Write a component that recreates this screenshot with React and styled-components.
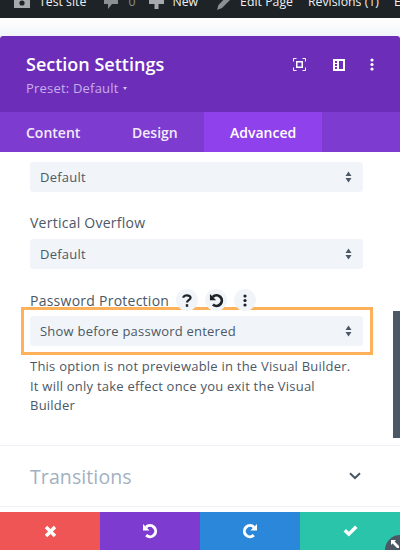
import React from 'react';
import styled, { createGlobalStyle } from 'styled-components';

const GlobalStyle = createGlobalStyle`
  html, body {
    margin: 0;
    padding: 0;
    background: #fff;
  }
  * {
    box-sizing: border-box;
  }
`;

const Page = styled.div`
  width: 400px;
  height: 550px;
  overflow: hidden;
  display: flex;
  flex-direction: column;
  position: relative;
  font-family: "Open Sans", sans-serif;
  background: #fff;
`;

const AdminBar = styled.div`
  height: 18px;
  flex-shrink: 0;
  background: #1d2327;
  display: flex;
  align-items: flex-end;
  overflow: hidden;
  white-space: nowrap;
  padding: 0 0 7px 14px;
`;

const AdminItem = styled.div`
  display: flex;
  align-items: center;
  gap: ${(p) => p.$gap || 7}px;
  margin-right: ${(p) => p.$right || 0}px;
  font-size: 12.3px;
  line-height: 18px;
  color: ${(p) => p.$muted ? '#8c8f94' : '#f0f0f1'};
`;

const Gap = styled.div`
  height: 18px;
  flex-shrink: 0;
  background: linear-gradient(#ffffff, #f1f5f9);
`;

const Modal = styled.div`
  flex: 1;
  min-height: 0;
  display: flex;
  flex-direction: column;
  background: #fff;
  border-radius: 3px 3px 0 0;
  overflow: hidden;
`;

const Header = styled.div`
  height: 76px;
  flex-shrink: 0;
  background: #6c2eb9;
  padding: 16px 26px 0;
  display: flex;
  justify-content: space-between;
`;

const Title = styled.h1`
  margin: 0;
  font-size: 18px;
  line-height: 24px;
  font-weight: 600;
  color: #fff;
`;

const Preset = styled.div`
  display: flex;
  align-items: center;
  gap: 4px;
  margin-top: 4px;
  font-size: 13px;
  line-height: 16px;
  font-weight: 500;
  letter-spacing: 0.2px;
  color: #c9aceb;
`;

const Caret = styled.span`
  width: 0;
  height: 0;
  margin-top: 1px;
  border-left: 2.5px solid transparent;
  border-right: 2.5px solid transparent;
  border-top: 3px solid #d8c3f2;
`;

const HeaderIcons = styled.div`
  display: flex;
  align-items: center;
  height: 13px;
  margin-top: 6px;
  gap: 27px;
`;

const HeaderDots = styled.span`
  display: flex;
  margin-left: -2px;
`;

const Tabs = styled.div`
  height: 40px;
  flex-shrink: 0;
  display: flex;
  background: #7e3bd0;
`;

const Tab = styled.div`
  width: ${(p) => p.$width}px;
  padding-left: ${(p) => p.$left}px;
  display: flex;
  align-items: center;
  font-size: 14px;
  font-weight: 600;
  color: ${(p) => p.$active ? '#fff' : '#f3ebfc'};
  background: ${(p) => p.$active ? '#8f42ec' : 'transparent'};
`;

const Body = styled.div`
  flex: 1;
  min-height: 0;
  padding: 10px 37px 0 30px;
  position: relative;
`;

const Select = styled.div`
  height: 30px;
  margin-top: ${(p) => p.$top || 0}px;
  background: #f1f5f9;
  border-radius: 3px;
  padding: 0 11px 0 10px;
  display: flex;
  align-items: center;
  justify-content: space-between;
  font-size: 13px;
  font-weight: 500;
  letter-spacing: 0.22px;
  color: #4c5866;
`;

const Field = styled.div`
  margin-top: ${(p) => p.$top}px;
`;

const Label = styled.div`
  display: flex;
  align-items: center;
  height: 22px;
  font-size: 14px;
  font-weight: 500;
  letter-spacing: 0.25px;
  color: #4c5866;
`;

const LabelButton = styled.span`
  width: 22px;
  height: 22px;
  margin-left: 7px;
  border-radius: 50%;
  background: #f1f5f9;
  display: flex;
  align-items: center;
  justify-content: center;
  flex-shrink: 0;
`;

const Highlight = styled.div`
  margin: -4px -10px 0 -9px;
  padding: 6px 7px 6px 6px;
  border: 3px solid #ffb05a;
`;

const Hint = styled.p`
  margin: 2px 0 0;
  max-width: 325px;
  font-size: 13px;
  line-height: 19.5px;
  font-weight: 500;
  letter-spacing: 0.23px;
  color: #4c5866;
`;

const ScrollThumb = styled.div`
  position: absolute;
  top: 159px;
  right: 0;
  width: 7px;
  height: 127px;
  background: #4c5866;
`;

const Toggle = styled.div`
  height: 62px;
  flex-shrink: 0;
  border-top: 1px solid #f1f0f7;
  border-bottom: 1px solid #f1f0f7;
  display: flex;
  align-items: center;
  justify-content: space-between;
  padding: 0 39px 0 30px;
`;

const ToggleTitle = styled.div`
  font-size: 19.5px;
  font-weight: 500;
  letter-spacing: 0.1px;
  color: #a3b0c2;
`;

const Footer = styled.div`
  height: 38px;
  flex-shrink: 0;
  margin-top: 5px;
  display: grid;
  grid-template-columns: repeat(4, 1fr);
`;

const FooterButton = styled.div`
  background: ${(p) => p.$color};
  display: flex;
  align-items: center;
  justify-content: center;
`;

const ResizeCorner = styled.div`
  position: absolute;
  right: -15px;
  bottom: -15px;
  width: 30px;
  height: 30px;
  border-radius: 50%;
  background: #4c5866;
  padding: 5px 0 0 6px;
  display: flex;
`;

const SortArrows = () => (
  <svg width="7" height="12" viewBox="0 0 7 12">
    <path d="M3.5 0.5 L6.5 5 H0.5 Z M0.5 7 H6.5 L3.5 11.5 Z" fill="#4c5866" />
  </svg>
);

const UndoIcon = ({ size = 16, color = '#fff', width = 3 }) => (
  <svg width={size} height={size} viewBox="0 0 16 16" fill="none">
    <path d="M4 4.2 A5.6 5.6 0 1 1 4.2 12.2" stroke={color} strokeWidth={width} />
    <path d="M1 1 V7.6 H7.6 Z" fill={color} />
  </svg>
);

const RedoIcon = ({ size = 16, color = '#fff', width = 3 }) => (
  <svg width={size} height={size} viewBox="0 0 16 16" fill="none">
    <path d="M12 4.2 A5.6 5.6 0 1 0 11.8 12.2" stroke={color} strokeWidth={width} />
    <path d="M15 1 V7.6 H8.4 Z" fill={color} />
  </svg>
);

const Dots = ({ color = '#fff', height = 13 }) => (
  <svg width="4" height={height} viewBox="0 0 4 13">
    <circle cx="2" cy="2" r="1.6" fill={color} />
    <circle cx="2" cy="6.5" r="1.6" fill={color} />
    <circle cx="2" cy="11" r="1.6" fill={color} />
  </svg>
);

const App = () => {
  return (
    <Page>
      <GlobalStyle />
      <AdminBar>
        <AdminItem $gap={9} $right={18}>
          <svg width="16" height="14" viewBox="0 0 16 14">
            <path d="M2.5 0 H13.5 Q16 0 16 3 V13 H0 V3 Q0 0 2.5 0 Z" fill="#a7aaad" />
            <circle cx="8" cy="8" r="2.6" fill="#1d2327" />
          </svg>
          Test site
        </AdminItem>
        <AdminItem $muted $gap={10} $right={14}>
          <svg width="14" height="16" viewBox="0 0 14 16">
            <path d="M0 0 H14 V10 H8 L4 15 V10 H0 Z" fill="#8c8f94" />
          </svg>
          0
        </AdminItem>
        <AdminItem $gap={8} $right={19}>
          <svg width="15" height="14" viewBox="0 0 15 14">
            <path d="M5.5 0 H9.5 V5 H15 V9 H9.5 V14 H5.5 V9 H0 V5 H5.5 Z" fill="#a7aaad" />
          </svg>
          New
        </AdminItem>
        <AdminItem $gap={8} $right={15}>
          <svg width="15" height="15" viewBox="0 0 15 15">
            <path d="M11 0 L15 3 L5 13 L0 15 L1.5 10 Z" fill="#8c8f94" />
          </svg>
          Edit Page
        </AdminItem>
        <AdminItem $right={15}>Revisions (1)</AdminItem>
        <AdminItem>E</AdminItem>
      </AdminBar>
      <Gap />
      <Modal>
        <Header>
          <div>
            <Title>Section Settings</Title>
            <Preset>Preset: Default <Caret /></Preset>
          </div>
          <HeaderIcons>
            <svg width="13" height="13" viewBox="0 0 13 13" fill="none">
              <path d="M0.5 3.5 V0.5 H3.5 M9.5 0.5 H12.5 V3.5 M12.5 9.5 V12.5 H9.5 M3.5 12.5 H0.5 V9.5" stroke="#fff" />
              <rect x="3.75" y="3.75" width="5.5" height="5.5" stroke="#fff" strokeWidth="1.5" />
            </svg>
            <svg width="12" height="12" viewBox="0 0 12 12">
              <path fillRule="evenodd" d="M0 0 H12 V12 H0 Z M2 2 V4 H4 V2 Z M2 5 V7 H4 V5 Z M2 8 V10 H4 V8 Z M6 2 V10 H10 V2 Z" fill="#fff" />
            </svg>
            <HeaderDots><Dots /></HeaderDots>
          </HeaderIcons>
        </Header>
        <Tabs>
          <Tab $width={106} $left={26}>Content</Tab>
          <Tab $width={98} $left={26}>Design</Tab>
          <Tab $width={118} $left={26} $active>Advanced</Tab>
        </Tabs>
        <Body>
          <Select>Default <SortArrows /></Select>
          <Field $top={19}>
            <Label>Vertical Overflow</Label>
            <Select $top={6}>Default <SortArrows /></Select>
          </Field>
          <Field $top={20}>
            <Label>
              Password Protection
              <LabelButton>
                <svg width="10" height="13" viewBox="0 0 10 13" fill="none">
                  <path d="M1.3 3.8 C1.3 0.6 8.6 0.6 8.6 3.8 C8.6 6 5 5.8 5 8.6" stroke="#1d2327" strokeWidth="2.2" />
                  <rect x="3.8" y="10.2" width="2.4" height="2.6" fill="#1d2327" />
                </svg>
              </LabelButton>
              <LabelButton>
                <UndoIcon size={15} color="#1d2327" />
              </LabelButton>
              <LabelButton>
                <Dots color="#1d2327" />
              </LabelButton>
            </Label>
          </Field>
          <Highlight>
            <Select>Show before password entered <SortArrows /></Select>
          </Highlight>
          <Hint>
            This option is not previewable in the Visual Builder. It will only take effect once you exit the Visual Builder
          </Hint>
          <ScrollThumb />
        </Body>
        <Toggle>
          <ToggleTitle>Transitions</ToggleTitle>
          <svg width="12" height="8" viewBox="0 0 12 8" fill="none">
            <path d="M1 1.2 L6 6 L11 1.2" stroke="#4c5866" strokeWidth="2" />
          </svg>
        </Toggle>
        <Footer>
          <FooterButton $color="#ef5555">
            <svg width="13" height="13" viewBox="0 0 13 13">
              <path d="M3.2 0.8 L6.5 4.1 L9.8 0.8 L12.2 3.2 L8.9 6.5 L12.2 9.8 L9.8 12.2 L6.5 8.9 L3.2 12.2 L0.8 9.8 L4.1 6.5 L0.8 3.2 Z" fill="#fff" />
            </svg>
          </FooterButton>
          <FooterButton $color="#7e3bd0"><UndoIcon /></FooterButton>
          <FooterButton $color="#2b87da"><RedoIcon /></FooterButton>
          <FooterButton $color="#29c4a9">
            <svg width="15" height="12" viewBox="0 0 15 12">
              <path d="M0.5 6.5 L3 4 L5.8 6.8 L12 0.6 L14.5 3.1 L5.8 11.6 Z" fill="#fff" />
            </svg>
          </FooterButton>
        </Footer>
        <ResizeCorner>
          <svg width="8" height="8" viewBox="0 0 8 8">
            <path d="M0 0 H5 L3.6 1.6 L8 6 V8 H6 L1.6 3.6 L0 5 Z" fill="#fff" />
          </svg>
        </ResizeCorner>
      </Modal>
    </Page>
  );
};

export default App;
